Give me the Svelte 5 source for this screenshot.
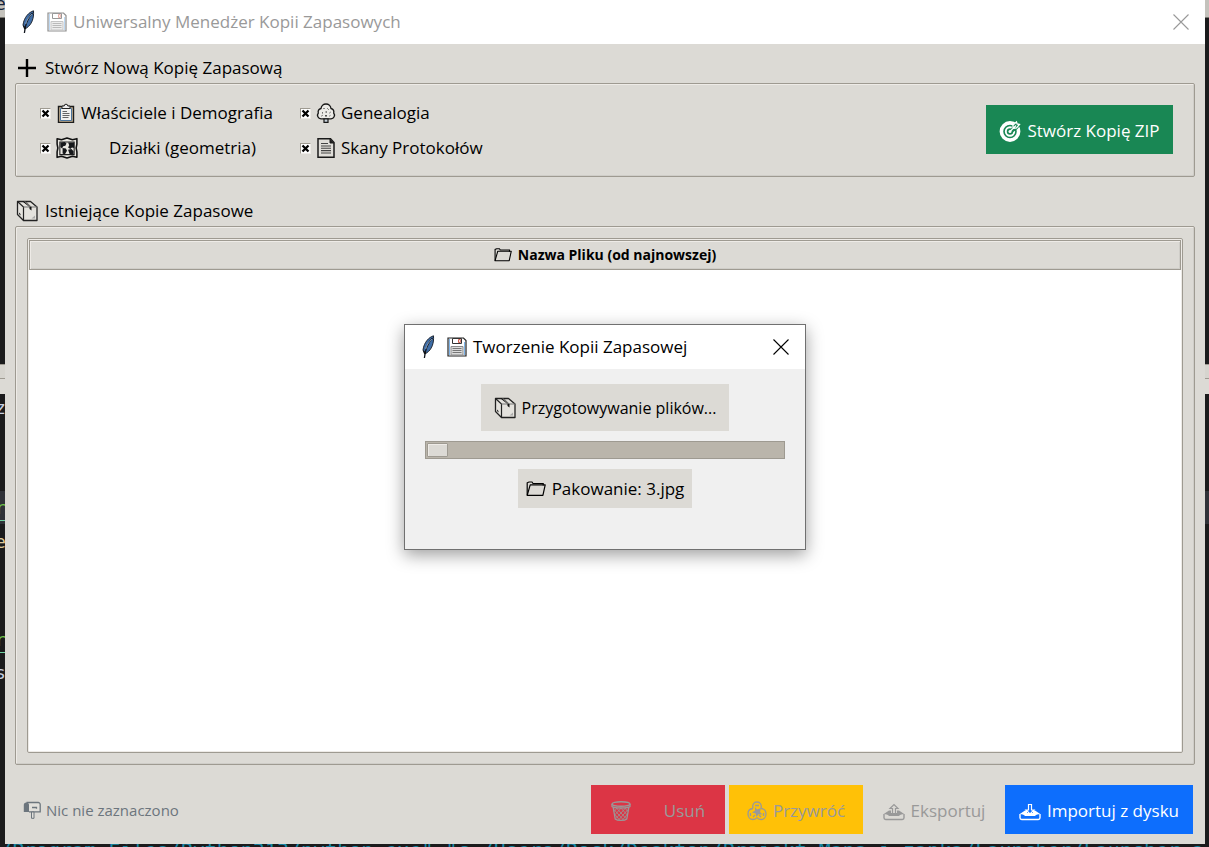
<script>
  let scopes = $state([
    { id: 'owners', icon: 'clipboard', label: 'Właściciele i Demografia', checked: true, wide: false },
    { id: 'genealogy', icon: 'tree', label: 'Genealogia', checked: true, wide: false },
    { id: 'parcels', icon: 'map', label: 'Działki (geometria)', checked: true, wide: true },
    { id: 'scans', icon: 'page', label: 'Skany Protokołów', checked: true, wide: false }
  ]);
  const progress = 6;
  const consoleGlyphs = [
    { text: 'e', y: -8, tone: 'ink' },
    { text: 'z', y: 396, tone: 'pale' },
    { text: 'r', y: 496, tone: 'green' },
    { text: 'e', y: 530, tone: 'sand' },
    { text: 'r', y: 628, tone: 'green' },
    { text: 's', y: 661, tone: 'pale' }
  ];
</script>

{#snippet icon(name)}
  {#if name === 'feather'}
    <svg class="ico feather" viewBox="0 0 14 24" aria-hidden="true">
      <path d="M12.5.8C8 2.2 3 7.200 2 15l1.600 4 1.900-1C11 14.500 13 8 12.500.8z" fill="#3f6ea8" stroke="#1d2430" />
      <path d="M11.500 3C7 7.500 4.500 12.500 3.400 23" fill="none" stroke="#10151d" stroke-width="1.300" />
      <path d="M11 4C7.500 7.500 5.500 10.500 4.800 14" fill="none" stroke="#b9cde6" stroke-width=".7" />
      <path d="M2 15l1.600 4 1.900-1z" fill="#111" />
    </svg>
  {:else if name === 'floppy'}
    <svg class="ico s20 floppy" viewBox="0 0 20 20" aria-hidden="true">
      <path d="M1 1h15.500L19 3.500V19H1z" fill="#fff" stroke="#222" stroke-width="1.200" />
      <path d="M2.500 2v16M17.500 5v13" stroke="#7fb4e8" />
      <path d="M5.500 1.500h9v5h-9z" fill="#fff" stroke="#333" />
      <path d="M11.500 2.500h1.800v3h-1.800z" fill="#fff" stroke="#d06052" />
      <path d="M4 9.500h12V18H4z" fill="#dcdcdc" stroke="#8c8c8c" />
      <path d="M5.500 11.500h9M5.500 13.500h9M5.500 15.500h9" stroke="#777" />
    </svg>
  {:else if name === 'plus'}
    <svg class="ico s20" viewBox="0 0 20 20" aria-hidden="true">
      <path d="M10 1v18M1 10h18" stroke="currentColor" stroke-width="2.400" />
    </svg>
  {:else if name === 'clipboard'}
    <svg class="ico s20" viewBox="0 0 20 20" aria-hidden="true">
      <path d="M2.500 3.500h15v16h-15z" fill="#cfb896" stroke="#1c1c1c" stroke-width="1.400" />
      <path d="M4.500 5.500h11v12h-11z" fill="#f2f2f0" stroke="#3b6a98" stroke-width=".9" />
      <path d="M6 5.500V3h2.200a1.800 1.800 0 0 1 3.600 0H14v2.500z" fill="#eee" stroke="#222" />
      <path d="M6.500 8.500h4.500M6.500 10.500h7M6.500 12.500h7M6.500 14.500h6" stroke="#555" stroke-width=".9" />
    </svg>
  {:else if name === 'map'}
    <svg class="ico s22" viewBox="0 0 20 20" aria-hidden="true">
      <path d="M1 1.500l4 1 5-1.500 5 1.500 4-1v5l-.7 3.500.7 3.500v5l-4-1-5 1.500-5-1.500-4 1v-5l.7-3.500L1 6.500z" fill="#e9e7e1" stroke="#111" stroke-width="1.400" stroke-linejoin="round" />
      <path d="M3.500 4.500h13v11.500h-13z" fill="none" stroke="#222" />
      <path d="M4 5l4-.5 1.500 1.500-1 2-2 .5-1 2L4 9zM6 10l3 .5 1 2-2 3.500-2-1zM11 5h5.500v5l-2-.5-1.500 1.500-2-1.500 1-2zM11 11.500l3-.5 2 2v3h-3.500z" fill="#16181b" />
    </svg>
  {:else if name === 'tree'}
    <svg class="ico s20" viewBox="0 0 20 20" aria-hidden="true">
      <path d="M8 15.800H5A3.600 3.600 0 0 1 2.300 10 3.800 3.800 0 0 1 5 5.500 5 5 0 0 1 10 1a5 5 0 0 1 5 4.500A3.800 3.800 0 0 1 17.700 10a3.600 3.600 0 0 1-2.700 5.800z" fill="#ecebe7" stroke="#171717" stroke-width="1.300" />
      <path d="M8 15.800h4v3.500H8z" fill="#c9d3dc" stroke="#171717" stroke-width="1.200" />
      <path d="M7.500 6l1-1M11.500 5.500l1 1M6 9.500l1 .8M9.500 9h1.500M13.500 10l1-.8M5.500 13l1-.6M9 12.500l1 .8 1-.8M13.500 13l.8-.5" stroke="#222" />
    </svg>
  {:else if name === 'page'}
    <svg class="ico s20" viewBox="0 0 20 20" aria-hidden="true">
      <path d="M2 .8h12.500L18 4.500v14.700H2z" fill="#e0ded9" stroke="#1a1a1a" stroke-width="1.500" />
      <path d="M14 1v4h4" fill="#222" stroke="#1a1a1a" />
      <path d="M5 5.500h7M5 8h10M5 10.300h10M5 12.600h10M5 15h10" stroke="#444" stroke-width="1.100" />
    </svg>
  {:else if name === 'box'}
    <svg class="ico s22" viewBox="0 0 22 22" aria-hidden="true">
      <path d="M1.500 1.500h13L21 7v13.500H7.500L1.500 14.500z" fill="#e4e2dd" stroke="#222" stroke-width="1.300" stroke-linejoin="round" />
      <path d="M1.500 1.500l6 5.500v13.500" fill="none" stroke="#222" stroke-width="1.200" />
      <path d="M7.500 7H21" stroke="#777" />
      <path d="M6.500 1.500h3.500L15.500 7v3.500l-2-1.500V7z" fill="#111" />
      <path d="M9 1.500L14.500 7" stroke="#e4e2dd" stroke-width=".8" />
      <path d="M3 12.500l1.500 1.500v1.500L3 14z" fill="#222" />
      <path d="M19 15.500v3h-3.500z" fill="#aaa" />
    </svg>
  {:else if name === 'folder'}
    <svg class="ico s20" viewBox="0 0 20 20" aria-hidden="true">
      <path d="M1.200 16.300V3.800L3 3h3l1 1.500h10.200v2" fill="none" stroke="currentColor" stroke-width="1.200" />
      <path d="M1.200 16.300L4.200 5.800h15l-2.300 10.500z" fill="none" stroke="currentColor" stroke-width="1.200" stroke-linejoin="round" />
    </svg>
  {:else if name === 'target'}
    <svg class="ico s22" viewBox="0 0 22 22" aria-hidden="true">
      <circle cx="11" cy="11.500" r="8.600" fill="none" stroke="#fff" stroke-width="3.600" />
      <circle cx="11" cy="11.500" r="4.200" fill="none" stroke="#fff" stroke-width="1.900" />
      <circle cx="11" cy="11.500" r="1.500" fill="#fff" />
      <path d="M12 9l2.500-5L18 1.500h3.500V5L18.500 9l-5 3.500z" fill="#198754" />
      <path d="M11 11.500l6-6M14 8.500V5l3.500-3 .6 2 2.400.5L17.500 8z" fill="none" stroke="#fff" stroke-width="1.300" />
    </svg>
  {:else if name === 'bin'}
    <svg class="ico s20" viewBox="0 0 20 20" aria-hidden="true" fill="none" stroke="currentColor">
      <ellipse cx="10" cy="3" rx="9" ry="2.300" stroke-width="1.400" />
      <path d="M1 3v2.500c2 2 16 2 18 0V3M2.200 6.500l2 11.500c2 1.800 9.600 1.800 11.600 0l2-11.500" stroke-width="1.300" />
      <path d="M3 8.500l9 10M5.500 7l9.500 10.500M10 7.200l6 6.500M13.800 7l3.200 3.500M3.500 13l5 6M17 8.500l-9 10M14.500 7L5 17.500M10 7.200l-6 6.500M6.200 7L3 10.500M16.500 13l-5 6" stroke-width=".8" />
    </svg>
  {:else if name === 'restore'}
    <svg class="ico s20" viewBox="0 0 20 20" aria-hidden="true" fill="none" stroke="currentColor" stroke-width="1.300">
      <path d="M6 7.500C5 3.500 7 1 10 1s5 2.500 4 6.500M14 7.500c3 .2 5 2.500 5 5.500s-2 5.500-5 5.500c-1.800 0-3.200-.6-4-2M6 7.500C3 7.700 1 10 1 13s2 5.500 5 5.500c1.800 0 3.200-.6 4-2" />
      <path d="M8 4.500h4M3.500 12v3M16.500 12v3M6 16l2-2M14 16l-2-2" />
      <path d="M8 6l2 2.500 4-1.500-1 4 2.500 2.500-4-.3L9.500 16 8.600 12.500 5 11.500l3-2z" fill="currentColor" stroke="none" />
    </svg>
  {:else if name === 'outbox' || name === 'inbox'}
    <svg class="ico s22" viewBox="0 0 22 20" aria-hidden="true">
      <path d="M1 13v3.800a1.700 1.700 0 0 0 1.700 1.700h16.600a1.700 1.700 0 0 0 1.700-1.700V13" fill="none" stroke="currentColor" stroke-width="1.400" />
      <path d="M.8 13L6 9.500h2V12h6V9.500h2l5.200 3.500c-2 .2-4 .5-5.200 2H6c-1.200-1.500-3.200-1.800-5.200-2z" fill="currentColor" />
      {#if name === 'outbox'}
        <path d="M9.500 12.500V7.500H7L11 3.500l4 4h-2.500v5z" fill="#dcdad5" stroke="currentColor" stroke-width="1.200" />
      {:else}
        <path d="M9.500 3.500h3v5.500H15L11 13 7 9h2.500z" fill="#0d6efd" stroke="currentColor" stroke-width="1.200" />
      {/if}
    </svg>
  {:else if name === 'mailbox'}
    <svg class="ico s18" viewBox="0 0 18 18" aria-hidden="true">
      <path d="M3.500 1.500h11.700a2 2 0 0 1 2 2v7.300H6" fill="#e2e0db" stroke="currentColor" stroke-width="1.300" />
      <path d="M.8 11V4a2.600 2.600 0 0 1 5.200 0v7z" fill="currentColor" />
      <path d="M9 6.500h4.500v1.300" fill="none" stroke="currentColor" stroke-width="1.300" />
      <path d="M8.500 11h2.500v6.300H8.500z" fill="#e2e0db" stroke="currentColor" />
    </svg>
  {:else if name === 'close'}
    <svg class="ico s16" viewBox="0 0 16 16" aria-hidden="true">
      <path d="M.5.500l15 15M15.500.500l-15 15" stroke="currentColor" stroke-width="1.100" />
    </svg>
  {/if}
{/snippet}

<div class="desktop">
  <div class="pane"></div>
  <div class="active-line"></div>
  {#each consoleGlyphs as g}
    <span class="glyph {g.tone}" style="top: {g.y}px">{g.text}</span>
  {/each}
  <div class="command">/Program Files/Python313/python.exe" "c:/Users/Rock/Desktop/Projekt_Mapa i zapka/Launcher/Launcher.a</div>

  <main class="window">
    <header class="titlebar inactive">
      {@render icon('feather')}
      {@render icon('floppy')}
      <h1>Uniwersalny Menedżer Kopii Zapasowych</h1>
      <button class="close" aria-label="Zamknij">{@render icon('close')}</button>
    </header>

    <div class="content">
      <section>
        <h2>{@render icon('plus')}Stwórz Nową Kopię Zapasową</h2>
        <div class="frame create">
          <div class="scopes">
            {#each scopes as s (s.id)}
              <label class:wide={s.wide}>
                <input type="checkbox" bind:checked={s.checked} />
                {@render icon(s.icon)}
                <span>{s.label}</span>
              </label>
            {/each}
          </div>
          <button class="btn green">{@render icon('target')}Stwórz Kopię ZIP</button>
        </div>
      </section>

      <section class="existing">
        <h2>{@render icon('box')}Istniejące Kopie Zapasowe</h2>
        <div class="frame list">
          <div class="tree">
            <table>
              <thead>
                <tr><th scope="col"><span>{@render icon('folder')}Nazwa Pliku (od najnowszej)</span></th></tr>
              </thead>
              <tbody></tbody>
            </table>
          </div>
        </div>
      </section>

      <footer>
        <p>{@render icon('mailbox')}Nic nie zaznaczono</p>
        <button class="btn red" disabled>{@render icon('bin')}Usuń</button>
        <button class="btn yellow" disabled>{@render icon('restore')}Przywróć</button>
        <button class="btn plain" disabled>{@render icon('outbox')}Eksportuj</button>
        <button class="btn blue">{@render icon('inbox')}Importuj z dysku</button>
      </footer>
    </div>

    <div class="dialog" role="dialog" aria-labelledby="dialog-title">
      <header class="titlebar">
        {@render icon('feather')}
        {@render icon('floppy')}
        <h1 id="dialog-title">Tworzenie Kopii Zapasowej</h1>
        <button class="close" aria-label="Zamknij">{@render icon('close')}</button>
      </header>
      <div class="dialog-body">
        <p class="status">{@render icon('box')}Przygotowywanie plików...</p>
        <div class="progress" role="progressbar" aria-label="Postęp" aria-valuenow={progress} aria-valuemin="0" aria-valuemax="100">
          <div class="bar" style="width: {progress}%"></div>
        </div>
        <p class="file">{@render icon('folder')}Pakowanie: 3.jpg</p>
      </div>
    </div>
  </main>
</div>

<style>
  :global(body) {
    margin: 0;
    background: #1b1b1c;
  }
  .desktop {
    position: relative;
    box-sizing: border-box;
    min-height: 100vh;
    padding: 0 4px 3px 5px;
    display: flex;
    overflow: hidden;
    background: linear-gradient(#c4c2bc 0 17px, #77756f 17px 18px, #1b1b1c 18px);
    font-family: 'Open Sans', 'Noto Sans', sans-serif;
    font-size: 17px;
    line-height: 24px;
    color: #000;
  }
  .pane {
    position: absolute;
    top: 364px;
    left: 0;
    right: 0;
    height: 30px;
    background: linear-gradient(#9e9a91 0 1px, #d6d4ce 1px 14px, #9e9a91 14px 15px, #dcdad5 15px);
  }
  .active-line {
    position: absolute;
    top: 491px;
    left: 0;
    right: 0;
    height: 33px;
    background: #303238;
  }
  .glyph {
    position: absolute;
    left: -5px;
    font: 18px/24px 'DejaVu Sans Mono', monospace;
  }
  .ink { color: #16233a; }
  .pale { color: #c8cfe0; }
  .sand { color: #dcc89a; }
  .green {
    color: #6fc24a;
    border-bottom: 1px solid #6fd0a0;
  }
  .command {
    position: absolute;
    left: 0;
    bottom: -15px;
    font: 20px/24px 'DejaVu Sans Mono', monospace;
    color: #1787a5;
    white-space: nowrap;
  }

  .window {
    position: relative;
    flex: 1;
    min-width: 0;
    display: flex;
    flex-direction: column;
    background: #dcdad5;
  }
  h1, h2, p {
    margin: 0;
    font-size: 17px;
    font-weight: 400;
    white-space: nowrap;
  }
  .ico {
    display: block;
    flex: none;
  }
  .s16 { width: 16px; height: 16px; }
  .s18 { width: 18px; height: 18px; }
  .s20 { width: 20px; height: 20px; }
  .s22 { width: 22px; height: 22px; }
  .feather { width: 14px; height: 24px; margin-right: 6px; }

  .titlebar {
    display: flex;
    align-items: center;
    gap: 6px;
    height: 44px;
    padding: 0 16px;
    background: #fff;
  }
  .titlebar h1 { flex: 1; }
  .inactive { color: #999; }
  .inactive .floppy { opacity: 0.5; }
  .close {
    display: flex;
    padding: 0;
    border: 0;
    background: none;
    color: inherit;
  }

  .content {
    flex: 1;
    display: flex;
    flex-direction: column;
    padding: 9px 10px 10px;
  }
  h2 {
    display: flex;
    align-items: center;
    gap: 8px;
    height: 30px;
    padding-left: 2px;
  }
  .frame {
    box-sizing: border-box;
    border: 1px solid #9e9a91;
    border-radius: 2px;
    box-shadow: inset 1px 1px #eeebe7, inset -1px -1px #cfcdc8;
  }
  .create {
    display: flex;
    align-items: center;
    justify-content: space-between;
    height: 94px;
    padding: 0 21px 2px 24px;
  }
  .scopes {
    display: grid;
    grid-template-columns: 260px auto;
    grid-auto-rows: 35px;
    padding-top: 3px;
  }
  label {
    display: flex;
    align-items: center;
    gap: 5px;
    white-space: nowrap;
  }
  .wide span { margin-left: 26px; }
  input {
    appearance: none;
    box-sizing: border-box;
    width: 11px;
    height: 11px;
    margin: 0;
    border: 1px solid #9e9a91;
    border-right-color: #eeebe7;
    border-bottom-color: #eeebe7;
    background: #fff;
  }
  input:checked {
    background: #fff url("data:image/svg+xml,%3Csvg xmlns='http://www.w3.org/2000/svg' viewBox='0 0 9 9'%3E%3Cpath d='M1.500 1.500l6 6M7.500 1.500l-6 6' stroke='%23000' stroke-width='2.300'/%3E%3C/svg%3E");
  }

  .existing {
    flex: 1;
    display: flex;
    flex-direction: column;
    margin-top: 19px;
  }
  .existing h2 {
    gap: 7px;
    padding-left: 1px;
  }
  .list {
    flex: 1;
    display: flex;
    padding: 11px;
  }
  .tree {
    flex: 1;
    border: 1px solid #9e9a91;
    border-radius: 2px;
    padding: 1px;
    background: #fff;
    box-shadow: inset 0 0 0 1px #eeebe7;
  }
  table {
    width: 100%;
    border-collapse: separate;
    border-spacing: 0;
  }
  th {
    height: 28px;
    padding: 0;
    border: 1px solid #9e9a91;
    background: #dcdad5;
    box-shadow: inset 1px 1px #eeebe7, inset -1px -1px #cfcdc8;
    font-size: 14px;
    line-height: 20px;
  }
  th span {
    display: flex;
    align-items: center;
    justify-content: center;
    gap: 6px;
  }
  th .s20 { width: 18px; height: 18px; }

  footer {
    display: flex;
    align-items: center;
    margin-top: 20px;
    padding-right: 2px;
  }
  footer p {
    display: flex;
    align-items: center;
    gap: 5px;
    margin-right: auto;
    padding-left: 8px;
    font-size: 15px;
    color: #6c757d;
  }
  .btn {
    display: flex;
    align-items: center;
    justify-content: center;
    gap: 6px;
    box-sizing: border-box;
    height: 49px;
    padding: 3px 12px 0;
    border: 0;
    font: inherit;
    color: #fff;
    white-space: nowrap;
  }
  .btn:disabled { color: #999; }
  .btn.green { width: 187px; background: #198754; }
  .btn.red { width: 134px; gap: 33px; background: #dc3545; margin-right: 4px; }
  .btn.yellow { width: 134px; background: #ffc107; }
  .btn.plain { width: 142px; background: none; }
  .btn.blue { width: 188px; background: #0d6efd; }

  .dialog {
    position: absolute;
    top: 324px;
    left: calc(50% - 201px);
    box-sizing: border-box;
    width: 402px;
    border: 1px solid #707070;
    background: #f0f0f0;
    box-shadow: 0 5px 16px rgb(0 0 0 / 38%);
  }
  .dialog-body {
    display: flex;
    flex-direction: column;
    align-items: center;
    gap: 10px;
    padding: 15px 20px 41px;
  }
  .dialog-body p {
    display: flex;
    align-items: center;
    gap: 6px;
    background: #dcdad5;
  }
  .dialog-body .status {
    height: 47px;
    padding: 0 13px;
    font-size: 16px;
  }
  .file { height: 39px; padding: 0 8px; }
  .progress {
    box-sizing: border-box;
    width: 100%;
    height: 18px;
    padding: 1px;
    border: 1px solid #9e9a91;
    background: #bab5ab;
  }
  .bar {
    box-sizing: border-box;
    height: 14px;
    border: 1px solid #9e9a91;
    border-radius: 1px;
    background: #dcdad5;
    box-shadow: inset 1px 1px #eeebe7;
  }
</style>
